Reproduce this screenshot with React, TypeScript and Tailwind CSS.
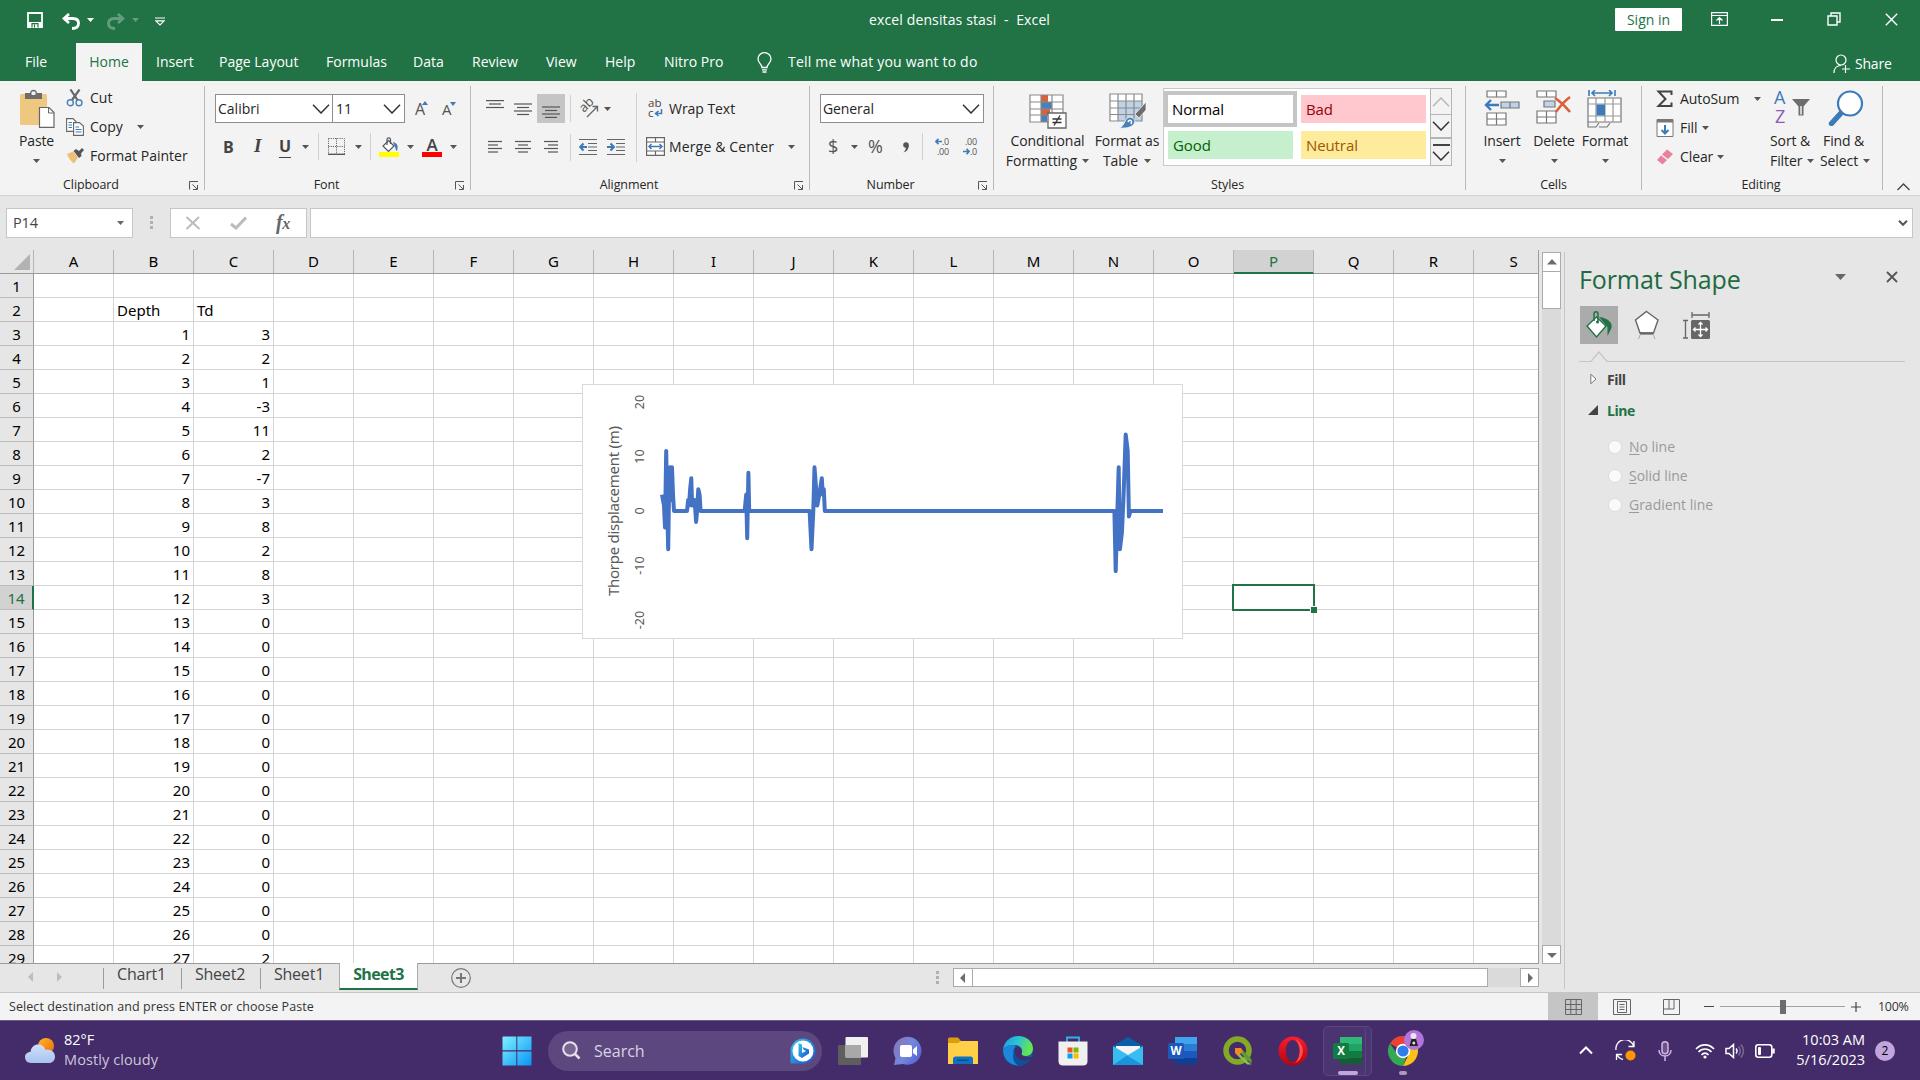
import React from "react";

type Box = { className?: string };

const Caret = ({ className = "" }: Box) => (
  <svg className={`block shrink-0 ${className}`} width="7" height="4" viewBox="0 0 7 4">
    <path d="M0 0H7L3.5 4Z" fill="currentColor" />
  </svg>
);

const Chevron = ({ className = "" }: Box) => (
  <svg className={`block shrink-0 ${className}`} width="18" height="10" viewBox="0 0 18 10" fill="none" stroke="#333" strokeWidth="1.5">
    <path d="M1 .8L9 9L17 .8" />
  </svg>
);

const Launcher = () => (
  <svg className="block shrink-0" width="10" height="10" viewBox="0 0 10 10" fill="none" stroke="#555" strokeWidth="1">
    <path d="M.5 8.500V.5H9M3.500 3.500L8 8M8.500 4V8.500H4" />
  </svg>
);

const VSep = ({ className = "" }: Box) => <div className={`w-px shrink-0 bg-[#d0d0d0] ${className}`} />;
const GroupSep = () => <div className="mt-[5px] h-[104px] w-px shrink-0 bg-[#b9b9b9]" />;

function Group({ label, className, launcher, children }: { label: string; className: string; launcher?: boolean; children: React.ReactNode }) {
  return (
    <div className={`flex shrink-0 flex-col ${className}`}>
      <div className="h-[94px]">{children}</div>
      <div className="flex h-[20px] items-center pt-[1px]">
        <div className="flex-1 text-center text-[12.5px] tracking-[-0.1px]">{label}</div>
        {launcher && (
          <div className="flex w-[22px] justify-end pr-[5px]">
            <Launcher />
          </div>
        )}
      </div>
    </div>
  );
}

const Lines = ({ rows, className = "" }: { rows: [number, number, number][]; className?: string }) => (
  <svg className={`block shrink-0 ${className}`} width="18" height="18" viewBox="0 0 18 18" stroke="#555" strokeWidth="1.2">
    {rows.map(([a, b, y]) => (
      <path key={y} d={`M${a} ${y}H${b}`} />
    ))}
  </svg>
);

const Indent = ({ out, className = "" }: { out?: boolean; className?: string }) => (
  <svg className={`block shrink-0 ${className}`} width="18" height="18" viewBox="0 0 18 18" fill="none" stroke="#666" strokeWidth="1.2">
    <path d="M0 1.500H18M9 5.500H18M9 9H18M9 12.500H18M0 16.500H18" />
    {out ? <path d="M8 9H2M4.500 5.500L1.200 9L4.500 12.500" stroke="#3d7ab8" strokeWidth="2.200" /> : <path d="M0 9H6M3.500 5.500L6.800 9L3.500 12.500" stroke="#3d7ab8" strokeWidth="2.200" />}
  </svg>
);

function Decimal({ inc, className = "" }: { inc?: boolean; className?: string }) {
  const arrow = (
    <svg width="7" height="7" viewBox="0 0 8 8" fill="none" stroke="#3d7ab8" strokeWidth="1.800">
      {inc ? <path d="M8 4H2M4 1L1 4L4 7" /> : <path d="M0 4H6M4 1L7 4L4 7" />}
    </svg>
  );
  return (
    <div className={`flex shrink-0 flex-col items-end text-[9px] leading-[10px] tracking-[-0.2px] text-[#555] ${className}`}>
      <div className="flex items-center">{inc ? arrow : null}{inc ? ".0" : ".00"}</div>
      <div className="flex items-center">{inc ? null : arrow}{inc ? ".00" : ".0"}</div>
    </div>
  );
}

function TitleBar() {
  return (
    <div className="flex h-[43px] items-start text-white">
      <svg className="mt-[12px] ml-[27px] block" width="16" height="16" viewBox="0 0 16 16" fill="none" stroke="#fff" strokeWidth="1.8">
        <path d="M1 1H15V15H1Z" />
        <path d="M1 10H15V15H1Z" fill="#fff" stroke="none" />
        <path d="M5 15.500V11.700H11V15.500M7.500 12.500V15.500" stroke="#217346" strokeWidth="1.200" />
      </svg>
      <svg className="mt-[13px] ml-[19px] block" width="18" height="17" viewBox="0 0 18 17" fill="none" stroke="#fff" strokeWidth="2.800">
        <path d="M7 1L2 5.500L7 10M2 5.500H11C15 5.500 16.500 8 16.500 10.500C16.500 14 13.500 15.500 10 15.500" />
      </svg>
      <Caret className="mt-[18px] ml-[7px]" />
      <svg className="mt-[13px] ml-[13px] block opacity-30" width="18" height="17" viewBox="0 0 18 17" fill="none" stroke="#fff" strokeWidth="2.800">
        <path d="M11 1L16 5.500L11 10M16 5.500H7C3 5.500 1.500 8 1.500 10.500C1.500 14 4.500 15.500 8 15.500" />
      </svg>
      <Caret className="mt-[18px] ml-[7px] opacity-30" />
      <svg className="mt-[17px] ml-[16px] block" width="10" height="9" viewBox="0 0 10 9" fill="none" stroke="#fff" strokeWidth="1.200">
        <path d="M0 1H10M.8 3.800L5 8L9.200 3.800Z" />
      </svg>
      <div className="mt-[10px] ml-[704px] w-[182px] text-[14px] leading-[20px] tracking-[0.13px] whitespace-pre">excel densitas stasi  -  Excel</div>
      <div className="mt-[8px] ml-[564px] flex h-[23px] w-[67px] items-center justify-center rounded-[1px] bg-white text-[14px] text-[#217346]">Sign in</div>
      <svg className="mt-[12px] ml-[29px] block" width="17" height="14" viewBox="0 0 17 14" fill="none" stroke="#fff" strokeWidth="1.200">
        <path d="M.6 .6H16.400V13.400H.6ZM.6 3.500H16.400M8.500 12V6M5.500 8.500L8.500 5.500L11.500 8.500" />
      </svg>
      <div className="mt-[19px] ml-[43px] h-[1.5px] w-[12px] bg-white" />
      <svg className="mt-[12px] ml-[44px] block" width="14" height="14" viewBox="0 0 14 14" fill="none" stroke="#fff" strokeWidth="1.400">
        <path d="M1 4H10V13H1ZM4 4V1H13V10H10" />
      </svg>
      <svg className="mt-[13px] ml-[44px] block" width="13" height="13" viewBox="0 0 13 13" fill="none" stroke="#fff" strokeWidth="1.400">
        <path d="M.8 .8L12.200 12.200M12.200 .8L.8 12.200" />
      </svg>
    </div>
  );
}

function RibbonTabs() {
  const tabs: [string, string][] = [
    ["Insert", "w-[63px]"], ["Page Layout", "w-[107px]"], ["Formulas", "w-[87px]"], ["Data", "w-[59px]"], ["Review", "w-[74px]"],
    ["View", "w-[59px]"], ["Help", "w-[59px]"], ["Nitro Pro", "w-[93px]"],
  ];
  return (
    <div className="flex h-[38px] items-stretch text-[14px] leading-[38px] tracking-[0px] text-white">
      <div className="w-[76px] pl-[25px]">File</div>
      <div className="w-[66px] bg-[#f3f3f3] text-center text-[#217346]">Home</div>
      <div className="w-[14px]" />
      {tabs.map(([t, w]) => (
        <div key={t} className={`shrink-0 whitespace-nowrap ${w}`}>{t}</div>
      ))}
      <svg className="mt-[9px] block" width="15" height="21" viewBox="0 0 15 21" fill="none" stroke="#fff" strokeWidth="1.300">
        <path d="M5 15.500C5 12 1 11 1 7A6.500 6.300 0 0 1 14 7C14 11 10 12 10 15.500ZM5 17.800H10M5.500 20H9.500" />
      </svg>
      <div className="ml-[16px] w-[1045px] tracking-[0.2px]">Tell me what you want to do</div>
      <svg className="mt-[11px] block" width="17" height="20" viewBox="0 0 17 20" fill="none" stroke="#fff" strokeWidth="1.200">
        <circle cx="8" cy="6" r="5" />
        <path d="M1 19C1 14 4 11.500 8 11.500M12.500 11V19M9 15H17" />
      </svg>
      <div className="ml-[5px] pt-[2px] tracking-[-0.2px]">Share</div>
    </div>
  );
}

function Clipboard() {
  return (
    <Group label="Clipboard" className="w-[204px]" launcher>
      <div className="flex">
        <div className="ml-[14px] flex w-[45px] flex-col items-center pt-[8px]">
          <svg width="36" height="39" viewBox="0 0 36 39">
            <rect x="1" y="5" width="27" height="31" rx="1.500" fill="#edc87e" />
            <path d="M6 4H11C11 -.5 18 -.5 18 4H23V10H6Z" fill="#6d6d6d" />
            <rect x="12.500" y="2.500" width="4" height="3.500" rx="1" fill="#f3f3f3" />
            <path d="M20.500 18.500H30L35 23.500V38.300H20.500Z" fill="#fff" stroke="#666" strokeWidth="1.200" />
            <path d="M29.500 18.500V24H35" fill="none" stroke="#666" />
          </svg>
          <div className="mt-[4px] text-[14px] leading-[18px] tracking-[-0.1px]">Paste</div>
          <Caret className="mt-[9px] text-[#555]" />
        </div>
        <div className="ml-[7px] flex flex-col pt-[2px] text-[14px] leading-[29px] tracking-[0px]">
          <div className="flex h-[29px] items-center">
            <svg width="18" height="18" viewBox="0 0 18 18" fill="none">
              <path d="M4.500 .5L11.500 11M13.500 .5L6 11" stroke="#666" strokeWidth="2.200" />
              <circle cx="4.300" cy="13.700" r="3" stroke="#4a80b8" strokeWidth="1.400" />
              <circle cx="13" cy="13.700" r="3" stroke="#4a80b8" strokeWidth="1.400" />
            </svg>
            <span className="ml-[6px]">Cut</span>
          </div>
          <div className="flex h-[29px] items-center">
            <svg width="18" height="18" viewBox="0 0 18 18" fill="#fff" stroke="#666" strokeWidth="1.100">
              <path d="M.6 .6H7L10 3.600V13.400H.6Z" />
              <path d="M7.600 4.600H13.500L17.400 8V17.400H7.600Z" />
              <path d="M2.500 4.500H6M2.500 7H6M2.500 9.500H6M9.500 9H13M9.500 11.500H15.500M9.500 14H15.500" stroke="#3d7ab8" />
            </svg>
            <span className="ml-[6px] w-[34px]">Copy</span>
            <Caret className="ml-[13px] text-[#555]" />
          </div>
          <div className="flex h-[29px] items-center">
            <svg width="18" height="16" viewBox="0 0 18 16">
              <path d="M1 6L7 3.500L12 9.500L8 15.500C5 13.500 2.500 10 1 6Z" fill="#edc07a" />
              <path d="M7.500 3L10 1L13 3L16 0L18 2L15 5.500L15.500 8L13 10Z" fill="#555" />
            </svg>
            <span className="ml-[6px] whitespace-nowrap">Format Painter</span>
          </div>
        </div>
      </div>
    </Group>
  );
}

function FontGroup() {
  return (
    <Group label="Font" className="w-[265px]" launcher>
      <div className="mt-0 flex h-[42px] items-center pt-[13px] pl-[10px] text-[14px]">
        <div className="flex h-[29px] w-[118px] shrink-0 items-center justify-between border border-[#8e8e8e] bg-white pr-[2px] pl-[2px]">Calibri<Chevron /></div>
        <div className="-ml-px flex h-[29px] w-[73px] shrink-0 items-center justify-between border border-[#8e8e8e] bg-white pr-[3px] pl-[3px]">11<Chevron /></div>
        <div className="ml-[10px] flex w-[15px] items-start text-[16px] leading-none text-[#555]">
          A<svg className="-ml-[3px] block shrink-0" width="6" height="4" viewBox="0 0 6 4"><path d="M0 4L3 0L6 4Z" fill="#3d7ab8" /></svg>
        </div>
        <div className="ml-[12px] flex w-[15px] items-start pt-px text-[15px] leading-none text-[#555]">
          A<svg className="-ml-[2px] block shrink-0" width="6" height="4" viewBox="0 0 6 4"><path d="M0 0L3 4L6 0Z" fill="#3d7ab8" /></svg>
        </div>
      </div>
      <div className="mt-[9px] flex h-[29px] items-center pl-[18px] text-[#444]">
        <span className="w-[31px] text-[16px] font-bold">B</span>
        <span className="w-[25px] font-['Liberation_Serif'] text-[19px] font-bold italic">I</span>
        <span className="w-[23px] text-[16px] leading-[17px]"><span className="border-b border-[#444] font-bold">U</span></span>
        <Caret className="text-[#555]" />
        <VSep className="ml-[9px] h-[27px]" />
        <svg className="ml-[9px] block" width="17" height="17" viewBox="0 0 17 17" stroke="#555" fill="none">
          <path d="M.5 .5H16.500V16M.5 .5V16M8.500 .5V16M.5 8.500H16.500" strokeDasharray="1 1.200" />
          <path d="M0 16.300H17" strokeWidth="1.400" />
        </svg>
        <Caret className="ml-[10px] text-[#555]" />
        <VSep className="ml-[8px] h-[27px]" />
        <svg className="ml-[8px] block" width="20" height="20" viewBox="0 0 20 20">
          <path d="M9.500 3.500L15 9L9.500 14.500L4 9Z" fill="#fff" stroke="#555" strokeWidth="1.200" />
          <path d="M8 8V2.500C8 .3 11.500 .3 11.500 2.500V7" fill="none" stroke="#555" strokeWidth="1.200" />
          <path d="M14 5C18.500 6 19.500 9 18 14C16 13 17 10.500 15.500 9Z" fill="#3d7ab8" />
          <rect x="0" y="15" width="20" height="5" fill="#ffff00" />
        </svg>
        <Caret className="ml-[8px] text-[#555]" />
        <div className="ml-[8px] flex h-[20px] w-[20px] flex-col items-center justify-between text-[17px] leading-[15px] font-semibold">
          A<div className="h-[5px] w-[20px] shrink-0 bg-[#ff0000]" />
        </div>
        <Caret className="ml-[8px] text-[#555]" />
      </div>
    </Group>
  );
}

function Alignment() {
  return (
    <Group label="Alignment" className="w-[338px]" launcher>
      <div className="flex text-[14px]">
        <div className="w-[99px]">
          <div className="flex h-[42px] items-center pt-[13px]">
            <Lines className="ml-[15px]" rows={[[0, 18, 0.600], [3, 15, 4], [0, 18, 7.500]]} />
            <Lines className="ml-[10px]" rows={[[0, 18, 4], [3, 15, 7.500], [0, 18, 11], [3, 15, 14.500]]} />
            <div className="ml-[5px] flex h-[29px] w-[28px] shrink-0 items-center justify-center bg-[#c5c5c5]">
              <Lines rows={[[0, 18, 7], [3, 15, 10.500], [0, 18, 14], [3, 15, 17.400]]} />
            </div>
          </div>
          <div className="mt-[9px] flex h-[29px] items-center">
            <Lines className="ml-[17px]" rows={[[0, 14, 3.500], [0, 10, 7], [0, 14, 10.500], [0, 10, 14]]} />
            <Lines className="ml-[9px]" rows={[[0, 16, 3.500], [3, 13, 7], [0, 16, 10.500], [3, 13, 14]]} />
            <Lines className="ml-[11px]" rows={[[0, 14, 3.500], [4, 14, 7], [0, 14, 10.500], [4, 14, 14]]} />
          </div>
        </div>
        <div className="flex w-px flex-col">
          <VSep className="mt-[14px] h-[27px]" />
          <VSep className="mt-[12px] h-[27px]" />
        </div>
        <div className="w-[65px]">
          <div className="flex h-[42px] items-center pt-[13px]">
            <svg className="ml-[8px] block overflow-visible" width="20" height="19" viewBox="0 0 20 19" fill="none" stroke="#666" strokeWidth="1.300">
              <path d="M8 18L18 8M13.500 7.500H18.500V12.500" />
              <text x="0" y="0" transform="translate(5 14) rotate(-45)" fontSize="13" fill="#555" stroke="none">ab</text>
            </svg>
            <Caret className="ml-[5px] text-[#555]" />
          </div>
          <div className="mt-[9px] flex h-[29px] items-center">
            <Indent out className="ml-[8px]" />
            <Indent className="ml-[10px]" />
          </div>
        </div>
        <VSep className="mt-[12px] h-[69px]" />
        <div>
          <div className="flex h-[42px] items-center pt-[12px]">
            <div className="ml-[11px] flex w-[16px] flex-col text-[11.5px] leading-[10px] text-[#444]">
              <span>ab</span>
              <span className="flex items-center">c<svg width="9" height="8" viewBox="0 0 9 8" fill="none" stroke="#3d7ab8" strokeWidth="1.500"><path d="M7.500 0V4.500H2M4.500 2L1.500 4.500L4.500 7" /></svg></span>
            </div>
            <span className="ml-[5px] tracking-[-0.05px]">Wrap Text</span>
          </div>
          <div className="mt-[9px] flex h-[29px] items-center">
            <svg className="ml-[9px] block" width="19" height="19" viewBox="0 0 19 19" fill="#fff" stroke="#666" strokeWidth="1.200">
              <path d="M.6 .6H18.400V18.400H.6ZM.6 5H18.400M.6 14H18.400M9.500 .6V5M9.500 14V18.400" />
              <path d="M3 9.500H16M5.500 7L3 9.500L5.500 12M13.500 7L16 9.500L13.500 12" stroke="#3d7ab8" fill="none" strokeWidth="1.500" />
            </svg>
            <span className="ml-[4px] w-[107px] whitespace-nowrap tracking-[0.15px]">Merge &amp; Center</span>
            <Caret className="ml-[12px] text-[#555]" />
          </div>
        </div>
      </div>
    </Group>
  );
}

function NumberGroup() {
  return (
    <Group label="Number" className="w-[183px]" launcher>
      <div className="flex h-[42px] items-center pt-[13px] pl-[10px] text-[14px]">
        <div className="flex h-[29px] w-[164px] items-center justify-between border border-[#8e8e8e] bg-white pr-[3px] pl-[2px] tracking-[-0.1px]">General<Chevron /></div>
      </div>
      <div className="mt-[9px] flex h-[29px] items-center pl-[18px] text-[18px] text-[#555]">
        <span className="w-[23px]">$</span>
        <Caret />
        <span className="ml-[10px] w-[34px] text-[18px]">%</span>
        <span className="flex w-[20px] justify-start">
          <svg width="8" height="12" viewBox="0 0 8 12"><circle cx="4" cy="4" r="2.800" fill="#555" /><path d="M6.800 4C6.800 8 5 10.500 1.500 11.500C3.500 9.500 4 7.500 4 5Z" fill="#555" /></svg>
        </span>
        <VSep className="h-[27px]" />
        <Decimal inc className="ml-[9px] w-[17px]" />
        <Decimal className="ml-[11px] w-[17px]" />
      </div>
    </Group>
  );
}

function StyleTile({ text, className }: { text: string; className: string }) {
  return <div className={`flex h-[28px] w-[125px] shrink-0 items-center pb-px pl-[5px] text-[15px] tracking-[-0.1px] ${className}`}>{text}</div>;
}

function Styles() {
  return (
    <Group label="Styles" className="w-[471px] [&>div:last-child]:pr-[4px]">
      <div className="flex h-[94px] text-[14px] leading-[20px] tracking-[-0.05px]">
        <div className="ml-[8px] flex w-[91px] flex-col items-center pt-[13px]">
          <svg width="38" height="35" viewBox="0 0 38 35">
            <path d="M1 1H34V28H1Z" fill="#fff" />
            <path d="M12 1H19V8H12ZM12 15H21V21H12Z" fill="#d9603b" />
            <path d="M12 8H23V15H12ZM12 21H18V28H12Z" fill="#4a80b8" />
            <path d="M1 1H34V28H1ZM12 1V28M23 1V28M1 8H34M1 15H34M1 21H34" fill="none" stroke="#8a8a8a" strokeWidth="1.200" />
            <path d="M19 19H37V34H19Z" fill="#fff" stroke="#666" strokeWidth="1.300" />
            <path d="M23.500 25H32.500M23.500 28.500H32.500M31 21.500L25 31.500" stroke="#333" strokeWidth="1.300" />
          </svg>
          <span className="mt-[2px]">Conditional</span>
          <span className="flex items-center">Formatting<Caret className="ml-[5px] text-[#555]" /></span>
        </div>
        <div className="flex w-[68px] flex-col items-center pt-[12px]">
          <svg className="ml-[2px]" width="38" height="36" viewBox="0 0 38 36">
            <path d="M1 1H33V28H1Z" fill="#fff" />
            <path d="M9 8H33V28H9Z" fill="#bfd2e8" />
            <path d="M1 1H33V28H1ZM9 1V28M17 1V28M25 1V28M1 8H33M1 15H33M1 21.500H33" fill="none" stroke="#8a8a8a" strokeWidth="1.200" />
            <path d="M37 9V17L30 25L26 21Z" fill="#6d6d6d" stroke="#f3f3f3" strokeWidth=".8" />
            <path d="M10 35C16 33 15 26 20 24C25 24 27 28 25 31C22 35 16 35.500 10 35Z" fill="#4a80b8" stroke="#f3f3f3" />
            <path d="M19 29C20 26 24 27 22 31" fill="none" stroke="#fff" strokeWidth="1.500" />
          </svg>
          <span className="mt-[2px] whitespace-nowrap">Format as</span>
          <span className="flex items-center">Table<Caret className="ml-[6px] text-[#555]" /></span>
        </div>
        <div className="mt-[7px] ml-[2px] flex h-[78px] w-[289px] border border-[#c9c9c9] bg-white">
          <div className="w-[266px] shrink-0">
            <div className="mt-[2px] flex h-[36px] items-center">
              <div className="flex h-[36px] w-[133px] items-center border-4 border-[#c5c5c5] bg-white pl-[4px] text-[15px] tracking-[-0.1px] text-black">Normal</div>
              <StyleTile text="Bad" className="ml-[4px] bg-[#ffc7ce] text-[#9c0006]" />
            </div>
            <div className="mt-[4px] flex">
              <StyleTile text="Good" className="ml-[4px] bg-[#c6efce] text-[#006100]" />
              <StyleTile text="Neutral" className="ml-[8px] bg-[#ffeb9c] text-[#9c5700]" />
            </div>
          </div>
          <div className="-my-px -mr-px flex flex-1 flex-col border border-[#b5b5b5] bg-[#f3f3f3]">
            <div className="flex h-[25px] items-center justify-center opacity-30"><Chevron className="rotate-180" /></div>
            <div className="flex h-[24px] items-center justify-center border-y border-[#b5b5b5]"><Chevron /></div>
            <div className="flex flex-1 flex-col items-center justify-center gap-[5px] border-t border-[#b5b5b5]">
              <div className="h-[2px] w-[17px] bg-[#444]" />
              <Chevron />
            </div>
          </div>
        </div>
      </div>
    </Group>
  );
}

function Cells() {
  const col = "flex flex-col items-center pt-[9px]";
  return (
    <Group label="Cells" className="w-[175px]">
      <div className="flex text-[14px] leading-[20px] tracking-[-0.1px]">
        <div className={`ml-[12px] w-[48px] ${col}`}>
          <svg width="36" height="36" viewBox="0 0 36 36" fill="#fff" stroke="#777" strokeWidth="1.200">
            <path d="M3 1H22V7H3ZM12.500 1V7M3 23H22V35H3ZM12.500 23V35M3 29H22" />
            <path d="M17 12H35V18H17ZM26 12V18" fill="#bfd2e8" />
            <path d="M15 15H2M7 10L2 15L7 20" fill="none" stroke="#3d7ab8" strokeWidth="2.400" />
          </svg>
          <span className="mt-[5px]">Insert</span>
          <Caret className="mt-[8px] text-[#555]" />
        </div>
        <div className={`ml-[2px] w-[52px] ${col}`}>
          <svg width="36" height="36" viewBox="0 0 36 36" fill="#fff" stroke="#777" strokeWidth="1.200">
            <path d="M1 1H20V7H1ZM10.500 1V7M1 21H20V33H1ZM10.500 21V33M1 27H20" />
            <path d="M8 11H19V17H8Z" fill="#bfd2e8" />
            <path d="M19 8C25 12 30 17 34 22M34 7C27 12 23 18 20 22" fill="none" stroke="#d9603b" strokeWidth="2.500" />
          </svg>
          <span className="mt-[5px]">Delete</span>
          <Caret className="mt-[8px] text-[#555]" />
        </div>
        <div className={`w-[50px] ${col}`}>
          <svg width="36" height="38" viewBox="0 0 36 38" fill="#fff" stroke="#777" strokeWidth="1.200">
            <path d="M1 8H34V32H1Z" />
            <path d="M1 14H34M1 26H34M9 8V32M18 8V32M26 8V32" stroke="#999" />
            <path d="M9.500 14.500H18V25.500H9.500Z" fill="#3d7ab8" stroke="none" />
            <path d="M1 32V37H9L12 33M12 37H20L23 33" fill="none" />
            <path d="M2 0V6M28 0V6M5 3H25M8 0L5 3L8 6M22 0L25 3L22 6" fill="none" stroke="#3d7ab8" strokeWidth="1.600" />
          </svg>
          <span className="mt-[3px]">Format</span>
          <Caret className="mt-[8px] text-[#555]" />
        </div>
      </div>
    </Group>
  );
}

function Editing() {
  return (
    <Group label="Editing" className="w-[240px] [&>div:last-child]:pr-[2px]">
      <div className="flex text-[14px] leading-[20px] tracking-[-0.1px]">
        <div className="ml-[14px] w-[111px] pt-[3px]">
          <div className="flex h-[29px] items-center">
            <svg width="18" height="18" viewBox="0 0 18 18" fill="none" stroke="#444" strokeWidth="2">
              <path d="M15.500 5V1.500H2.500L9.500 9L2.500 16H15.500V12.500" />
            </svg>
            <span className="ml-[6px] w-[62px]">AutoSum</span>
            <Caret className="ml-[12px] text-[#555]" />
          </div>
          <div className="flex h-[29px] items-center">
            <svg width="18" height="18" viewBox="0 0 18 18" fill="#fff" stroke="#777">
              <path d="M1 .5H17V17.500H1Z" />
              <path d="M1 2H17" strokeWidth="3" />
              <path d="M9 6V14M5.500 11L9 14.500L12.500 11" fill="none" stroke="#3d7ab8" strokeWidth="2" />
            </svg>
            <span className="ml-[6px]">Fill</span>
            <Caret className="ml-[5px] text-[#555]" />
          </div>
          <div className="flex h-[29px] items-center">
            <svg width="18" height="16" viewBox="0 0 18 16">
              <path d="M11 0.500L17 5L12 10L6 5.500Z" fill="#e8829a" />
              <path d="M5 6.500L11 11L6.500 15.500L1 11Z" fill="#e8829a" />
            </svg>
            <span className="ml-[6px]">Clear</span>
            <Caret className="ml-[4px] text-[#555]" />
          </div>
        </div>
        <div className="w-[50px] pt-[9px]">
          <svg className="ml-[8px] block overflow-visible" width="36" height="36" viewBox="0 0 36 36">
            <text x="-1" y="14" fontSize="18" fill="#3d7ab8">A</text>
            <text x="0" y="33" fontSize="18" fill="#8e5bb0">Z</text>
            <path d="M17 9H35L28.500 16.500V25.500H23.500V16.500Z" fill="#6d6d6d" />
            <path d="M26 16V24.500" stroke="#f3f3f3" strokeWidth="1.500" />
          </svg>
          <span className="mt-[5px] block pl-[3px]">Sort &amp;</span>
          <span className="flex items-center pl-[3px]">Filter<Caret className="ml-[5px] text-[#555]" /></span>
        </div>
        <div className="w-[55px] pt-[9px]">
          <svg className="ml-[11px] block" width="36" height="36" viewBox="0 0 36 36" fill="none" stroke="#3d7ab8">
            <path d="M14 22L3.500 33.500" strokeWidth="5.500" strokeLinecap="round" />
            <circle cx="22" cy="13.500" r="12" fill="#fff" strokeWidth="2.200" />
          </svg>
          <span className="mt-[5px] block pl-[6px]">Find &amp;</span>
          <span className="flex items-center pl-[3px]">Select<Caret className="ml-[5px] text-[#555]" /></span>
        </div>
      </div>
    </Group>
  );
}

function Ribbon() {
  return (
    <div className="flex h-[115px] border-b border-[#d2d2d2] bg-[#f3f3f3] text-[#262626]">
      <Clipboard />
      <GroupSep />
      <FontGroup />
      <GroupSep />
      <Alignment />
      <GroupSep />
      <NumberGroup />
      <GroupSep />
      <Styles />
      <GroupSep />
      <Cells />
      <GroupSep />
      <Editing />
      <GroupSep />
      <svg className="mt-[102px] ml-[14px] block" width="13" height="8" viewBox="0 0 13 8" fill="none" stroke="#444" strokeWidth="1.300">
        <path d="M.5 7L6.500 1L12.500 7" />
      </svg>
    </div>
  );
}

const Dots = ({ className = "" }: Box) => (
  <div className={`flex flex-col gap-[2px] ${className}`}>
    <div className="h-[3px] w-[3px] bg-[#b0b0b0]" />
    <div className="h-[3px] w-[3px] bg-[#b0b0b0]" />
    <div className="h-[3px] w-[3px] bg-[#b0b0b0]" />
  </div>
);

function FormulaBar() {
  return (
    <div className="flex h-[54px] items-start pt-[12px] pl-[6px]">
      <div className="flex h-[30px] w-[127px] items-center justify-between border border-[#c6c6c6] bg-white pr-[8px] pl-[6px] text-[14.5px] tracking-[-0.1px] text-[#444]">P14<Caret className="text-[#666]" /></div>
      <Dots className="mt-[8px] ml-[17px]" />
      <div className="ml-[17px] flex h-[30px] w-[137px] items-center border border-[#c6c6c6] bg-white">
        <svg className="ml-[14px]" width="16" height="14" viewBox="0 0 16 14" fill="none" stroke="#bcbcbc" strokeWidth="2"><path d="M1.500 1L14.500 13M14 1L1.500 13" /></svg>
        <svg className="ml-[29px]" width="17" height="14" viewBox="0 0 17 14" fill="none" stroke="#bcbcbc" strokeWidth="3"><path d="M1 8L6 12L16 1.500" /></svg>
        <span className="ml-[29px] pb-[2px] font-['Liberation_Serif'] text-[20px] font-bold tracking-[-0.5px] text-[#666] italic">f<span className="text-[16px]">x</span></span>
      </div>
      <div className="ml-[3px] flex h-[30px] w-[1603px] items-center justify-end border border-[#c6c6c6] bg-white pr-[4px]">
        <svg width="10" height="6" viewBox="0 0 10 6" fill="none" stroke="#555" strokeWidth="2"><path d="M1 .8L5 4.800L9 .8" /></svg>
      </div>
    </div>
  );
}

const COLS = "ABCDEFGHIJKLMNOPQRS".split("");
const ROWS = Array.from({ length: 29 }, (_, i) => i + 1);
const TD = [3, 2, 1, -3, 11, 2, -7, 3, 8, 2, 8, 3, 0, 0, 0, 0, 0, 0, 0, 0, 0, 0, 0, 0, 0, 0, 2];

function cellText(row: number, col: string): string {
  if (row === 2) return col === "B" ? "Depth" : col === "C" ? "Td" : "";
  if (row >= 3 && col === "B") return String(row - 2);
  if (row >= 3 && col === "C") return String(TD[row - 3]);
  return "";
}

const SERIES: [number, number][] = [
  [0, 3], [1, 2], [2, 1], [3, -3], [4.200, 11], [5, 2], [6.200, -7], [7, 3], [8, 8], [9, 2], [10, 8], [11, 3], [12, 0],
  [25, 0], [26, 2], [27, 1], [28, 4], [29.200, 6], [30, 1], [31, 2], [32.500, 2], [34, -2], [35, 0], [36.200, 4], [37.500, 3], [38.500, 0],
  [82.500, 0], [84, 3], [85, -5], [86.200, 7], [87, 0], [147.300, 0], [149.200, -7], [151, 0], [152.200, 8], [155, 1], [157, 3], [159.500, 6], [160.500, 3],
  [161.500, 4], [162.500, 0], [451.500, 0], [452.800, -11], [454.500, 0], [455.800, 8], [457, -7], [459, -4], [460.500, 2], [462.800, 14], [464.800, 11],
  [466, -1], [467.500, 0], [500, 0],
];

function Chart() {
  const points = SERIES.map(([i, v]) => `${(80 + i * 1.002).toFixed(1)},${(127 - v * 5.460).toFixed(1)}`).join(" ");
  return (
    <div className="absolute top-[134px] left-[582px] h-[255px] w-[601px] border border-[#d9d9d9] bg-white">
      <svg className="block" width="599" height="253" viewBox="1 1 599 253" fill="#595959">
        <text transform="translate(36.500 127) rotate(-90)" textAnchor="middle" fontSize="15" textLength="170">Thorpe displacement (m)</text>
        {[20, 10, 0, -10, -20].map((v) => (
          <text key={v} transform={`translate(62 ${127 - v * 5.450}) rotate(-90)`} textAnchor="middle" fontSize="12.500">{v}</text>
        ))}
        <polyline points={points} fill="none" stroke="#4472c4" strokeWidth="4" strokeLinejoin="round" strokeLinecap="butt" />
      </svg>
    </div>
  );
}

function Grid() {
  return (
    <div className="relative h-[714px] w-[1539px] shrink-0 overflow-hidden border-r border-b border-[#9b9b9b] font-['Noto_Sans'] text-black">
      <div className="flex h-[24px] border-b border-[#9b9b9b]">
        <div className="flex w-[34px] shrink-0 justify-end border-r border-[#b5b5b5] pt-[4px] pr-[3px]">
          <svg width="16" height="16" viewBox="0 0 16 16"><path d="M16 0V16H0Z" fill="#b2b2b2" /></svg>
        </div>
        {COLS.map((c) => (
          <div key={c} className={`w-[80px] shrink-0 border-r border-[#b5b5b5] text-center text-[15px] leading-[23px] ${c === "P" ? "-mb-px border-b-2 border-b-[#217346] bg-[#d2d2d2] text-[#217346]" : ""}`}>{c}</div>
        ))}
      </div>
      {ROWS.map((r) => (
        <div key={r} className="flex h-[24px] bg-white text-[15px] leading-[24px]">
          <div className={`w-[34px] shrink-0 border-r border-b border-b-[#bdbdbd] text-center text-[15px] ${r === 14 ? "border-r-2 border-r-[#217346] bg-[#d2d2d2] text-[#217346]" : "border-r-[#9b9b9b] bg-[#e6e6e6]"}`}>{r}</div>
          {COLS.map((c) => (
            <div key={c} className={`w-[80px] shrink-0 border-r border-b border-[#d4d4d4] px-[3px] ${r > 2 ? "text-right" : ""}`}>{cellText(r, c)}</div>
          ))}
        </div>
      ))}
      <div className="absolute top-[334px] left-[1232px] h-[27px] w-[83px] border-2 border-[#217346]">
        <div className="absolute -right-[4px] -bottom-[4px] h-[7px] w-[7px] border-t border-l border-white bg-[#217346]" />
      </div>
      <Chart />
    </div>
  );
}

const Tri = ({ d, color = "#6d6d6d" }: { d: string; color?: string }) => (
  <svg width="10" height="10" viewBox="0 0 10 10"><path d={d} fill={color} /></svg>
);

function VScroll() {
  return (
    <div className="mt-[2px] ml-[3px] flex h-[712px] w-[19px] shrink-0 flex-col bg-[#dadada]">
      <div className="flex h-[20px] items-center justify-center border border-[#ababab] bg-white"><Tri d="M0 7.500L5 2L10 7.500Z" /></div>
      <div className="-mt-px h-[38px] border border-[#ababab] bg-white" />
      <div className="flex-1" />
      <div className="flex h-[19px] items-center justify-center border border-[#ababab] bg-white"><Tri d="M0 3L5 8L10 3Z" /></div>
    </div>
  );
}

function SheetTabs() {
  return (
    <div className="flex h-[28px] w-[1564px] items-start text-[16px] leading-[21px] tracking-[-0.2px] text-[#444]">
      <div className="mt-[8px] ml-[26px] w-[28px]"><Tri d="M7 0V10L2 5Z" color="#bdbdbd" /></div>
      <div className="mt-[8px] w-[49px]"><Tri d="M3 0V10L8 5Z" color="#bdbdbd" /></div>
      <div className="mt-[4px] h-[21px] w-px bg-[#9b9b9b]" />
      <div className="w-[77px] pr-[2px] text-center">Chart1</div>
      <div className="mt-[4px] h-[21px] w-px bg-[#9b9b9b]" />
      <div className="w-[78px] pr-[2px] text-center">Sheet2</div>
      <div className="mt-[4px] h-[21px] w-px bg-[#9b9b9b]" />
      <div className="w-[78px] pr-[2px] text-center">Sheet1</div>
      <div className="relative -mt-px h-[27px] w-[79px] border-x border-b-2 border-x-[#ababab] border-b-[#217346] bg-white pt-px text-center font-bold tracking-[-0.6px] text-[#217346]">Sheet3</div>
      <svg className="mt-[4px] ml-[33px] block" width="20" height="20" viewBox="0 0 20 20" fill="none" stroke="#777">
        <circle cx="10" cy="10" r="9.300" strokeWidth="1.200" />
        <path d="M10 5V15M5 10H15" strokeWidth="2" />
      </svg>
      <Dots className="mt-[7px] ml-[465px]" />
      <div className="mt-[4px] ml-[14px] flex h-[19px] w-[586px] bg-[#dadada]">
        <div className="flex w-[20px] items-center justify-center border border-[#ababab] bg-white"><Tri d="M7 0V10L2 5Z" /></div>
        <div className="-ml-px w-[516px] border border-[#ababab] bg-white" />
        <div className="flex-1" />
        <div className="flex w-[19px] items-center justify-center border border-[#ababab] bg-white"><Tri d="M3 0V10L8 5Z" /></div>
      </div>
    </div>
  );
}

function Radio({ first, rest }: { first: string; rest: string }) {
  return (
    <div className="flex h-[29px] items-center text-[14px] tracking-[-0.02px] text-[#9a9a9a]">
      <div className="ml-[43px] h-[14px] w-[14px] rounded-full border border-[#dcdcdc] bg-[#fafafa]" />
      <span className="ml-[7px]"><span className="underline underline-offset-2">{first}</span>{rest}</span>
    </div>
  );
}

function FormatPane() {
  return (
    <div className="mt-[2px] flex flex-1 flex-col">
      <div className="mt-[11px] flex h-[32px] items-center pl-[14px]">
        <span className="w-[256px] text-[25px] leading-none tracking-[-0.1px] text-[#1e6a41]">Format Shape</span>
        <svg className="mb-[4px]" width="11" height="6" viewBox="0 0 11 6"><path d="M0 0H11L5.500 6Z" fill="#666" /></svg>
        <svg className="mb-[4px] ml-[40px]" width="12" height="12" viewBox="0 0 12 12" stroke="#555" strokeWidth="1.800"><path d="M1 1L11 11M11 1L1 11" /></svg>
      </div>
      <div className="mt-[11px] flex h-[38px] items-center pl-[15px]">
        <div className="flex h-[38px] w-[38px] items-center justify-center bg-[#ababab]">
          <svg width="28" height="28" viewBox="0 0 28 28">
            <path d="M11.500 6L21 15L11.500 26L2 15Z" fill="#fff" stroke="#217346" strokeWidth="1.400" />
            <path d="M9 10V3C9 0 13 0 13 3V11" fill="none" stroke="#217346" strokeWidth="1.500" />
            <circle cx="12.500" cy="11" r="1.500" fill="#217346" />
            <path d="M14 6C23 7 28 12 26.500 17L22.500 25V16Z" fill="#217346" />
          </svg>
        </div>
        <svg className="ml-[16px]" width="26" height="30" viewBox="0 0 26 30" fill="#fff" stroke="#666" strokeWidth="1.400">
          <path d="M12.500 1.500L24 10L19.500 23H6L1.500 10Z" />
          <path d="M6 23.500H19.500" strokeWidth="2.200" />
          <path d="M6 25L4.500 29M19.500 25L21 29" stroke="#aaa" strokeWidth="1" />
        </svg>
        <svg className="ml-[23px]" width="27" height="27" viewBox="0 0 27 27" fill="none" stroke="#666" strokeWidth="1.300">
          <path d="M9 0V6M26 0V6M9 3H26M0 8.500H5M0 26H5M2.500 8.500V26" />
          <rect x="8" y="8" width="19" height="19" rx="1.500" fill="#666" stroke="none" />
          <path d="M17.500 10.500V24.500M10.500 17.500H24.500M15.500 12.500L17.500 10.500L19.500 12.500M15.500 22.500L17.500 24.500L19.500 22.500M12.500 15.500L10.500 17.500L12.500 19.500M22.500 15.500L24.500 17.500L22.500 19.500" stroke="#fff" />
        </svg>
      </div>
      <svg className="mt-[7px] ml-[14px] block" width="326" height="12" viewBox="0 0 326 12" fill="none" stroke="#c4c4c4" strokeWidth="1.200"><path d="M0 10.500H12L20 1L28 10.500H326" /></svg>
      <div className="mt-[3px] flex h-[26px] items-center text-[14px] font-bold tracking-[-0.5px] text-[#444]">
        <svg className="ml-[25px]" width="7" height="12" viewBox="0 0 7 12" fill="#fff" stroke="#777"><path d="M.8 1.200V10.800L6 6Z" /></svg>
        <span className="ml-[10px]">Fill</span>
      </div>
      <div className="mt-[5px] flex h-[26px] items-center text-[14px] font-bold tracking-[-0.5px] text-[#217346]">
        <svg className="ml-[23px]" width="10" height="10" viewBox="0 0 10 10"><path d="M10 0V10H0Z" fill="#444" /></svg>
        <span className="ml-[9px]">Line</span>
      </div>
      <div className="mt-[9px]">
        <Radio first="N" rest="o line" />
        <Radio first="S" rest="olid line" />
        <Radio first="G" rest="radient line" />
      </div>
    </div>
  );
}

function StatusBar() {
  return (
    <div className="flex h-[28px] items-center border-t border-[#c6c6c6] bg-[#f3f3f3] text-[12.500px] text-[#333]">
      <span className="w-[1548px] pt-px pl-[9px] tracking-[0.080px]">Select destination and press ENTER or choose Paste</span>
      <div className="flex h-full w-[50px] items-center justify-center bg-[#c5c5c5]">
        <svg width="17" height="16" viewBox="0 0 17 16" fill="none" stroke="#666"><path d="M.5 .5H16.500V15.500H.5ZM5.800 .5V15.500M11.200 .5V15.500M.5 5.500H16.500M.5 10.500H16.500" /></svg>
      </div>
      <svg className="ml-[15px]" width="18" height="16" viewBox="0 0 18 16" fill="none" stroke="#666"><path d="M.5 .5H17.500V15.500H.5ZM4.500 2.500H13.500V13.500H4.500ZM6.500 5.500H11.500M6.500 8H11.500M6.500 10.500H11.500" /></svg>
      <svg className="ml-[32px]" width="17" height="16" viewBox="0 0 17 16" fill="none" stroke="#666"><path d="M.5 .5H16.500V15.500H.5ZM.5 10H11V.5M6 .5V10" /></svg>
      <div className="ml-[24px] h-[1.500px] w-[10px] bg-[#444]" />
      <div className="ml-[6px] flex h-[14px] w-[125px] items-center">
        <div className="h-px w-[60px] bg-[#a0a0a0]" />
        <div className="h-[14px] w-[6px] bg-[#6d6d6d]" />
        <div className="h-px flex-1 bg-[#a0a0a0]" />
      </div>
      <svg className="ml-[6px]" width="10" height="10" viewBox="0 0 10 10" stroke="#444" strokeWidth="1.200"><path d="M5 0V10M0 5H10" /></svg>
      <span className="ml-[17px] pt-px tracking-[-0.3px]">100%</span>
    </div>
  );
}

function OfficeIcon({ letter, c }: { letter: string; c: [string, string, string, string, string] }) {
  return (
    <svg width="30" height="30" viewBox="0 0 30 30">
      <rect x="7" y="1" width="22" height="7" fill={c[0]} />
      <rect x="7" y="8" width="22" height="7" fill={c[1]} />
      <rect x="7" y="15" width="22" height="7" fill={c[2]} />
      <rect x="7" y="22" width="22" height="6.500" fill={c[3]} />
      <rect x="0" y="7" width="16" height="16" rx="1.500" fill={c[4]} />
      <text x="8" y="19" textAnchor="middle" fontSize="11.500" fontWeight="bold" fill="#fff">{letter}</text>
    </svg>
  );
}

const Slot = ({ children }: { children: React.ReactNode }) => <div className="flex h-[60px] w-[55px] shrink-0 items-center justify-center">{children}</div>;

function Taskbar() {
  return (
    <div className="flex h-[60px] items-center border-t border-[#6b5a86] bg-[#432c69] text-white">
      <svg className="ml-[24px]" width="32" height="28" viewBox="0 0 32 28">
        <defs>
          <linearGradient id="cl" x1="0" y1="0" x2="0" y2="1"><stop offset="0" stopColor="#cfe0fa" /><stop offset="1" stopColor="#a9c3ee" /></linearGradient>
          <linearGradient id="sun" x1="0" y1="0" x2="1" y2="1"><stop offset="0" stopColor="#fbb829" /><stop offset="1" stopColor="#ef6c0f" /></linearGradient>
        </defs>
        <circle cx="22" cy="9" r="8" fill="url(#sun)" />
        <path d="M7 26C3 26 1 23 1 20C1 16.500 4 15 6.500 15C7 10 10.500 7.500 14 7.500C18 7.500 20.500 9.500 21.500 13C27 11.500 31 15 31 19.500C31 23.500 28.500 26 25 26Z" fill="url(#cl)" />
      </svg>
      <div className="ml-[8px] w-[438px] pb-[2px] text-[14.500px] leading-[20px]">
        <div>82°F</div>
        <div className="tracking-[0.1px] text-[#cfc6dc]">Mostly cloudy</div>
      </div>
      <svg width="30" height="30" viewBox="0 0 30 30">
        <defs><linearGradient id="win" x1="0" y1="0" x2="1" y2="1"><stop offset="0" stopColor="#7ff0ff" /><stop offset="1" stopColor="#0a93f5" /></linearGradient></defs>
        <path d="M1 .5H14.300V14.300H.5V1ZM15.300 .5H29.500V14.300H15.300ZM.5 15.500H14.300V29.500H.5ZM15.300 15.500H29.500V29.500H15.300Z" fill="url(#win)" />
      </svg>
      <div className="ml-[16px] flex h-[40px] w-[274px] items-center rounded-full bg-[#5c487e]">
        <svg className="ml-[14px]" width="19" height="19" viewBox="0 0 19 19" fill="none" stroke="#e6e1ee" strokeWidth="2"><circle cx="8" cy="8" r="6.800" fill="#76658f" /><path d="M13 13L17.500 17.500" strokeWidth="2.500" /></svg>
        <span className="ml-[13px] w-[196px] text-[16px] text-[#d9d2e4]">Search</span>
        <svg width="26" height="26" viewBox="0 0 26 26">
          <defs><linearGradient id="bing" x1="0" y1="0" x2="1" y2="1"><stop offset="0" stopColor="#35c3f3" /><stop offset="1" stopColor="#1a53c8" /></linearGradient></defs>
          <path d="M.5 25.500V13A12.500 12.500 0 1 1 13 25.500Z" fill="url(#bing)" />
          <circle cx="13" cy="13" r="10.500" fill="#fff" />
          <path d="M8.500 5L12 6.500V15L16 13L13.500 11.800L12.500 9L19 11.500V15.500L12 20L8.500 18Z" fill="url(#bing)" />
        </svg>
      </div>
      <div className="w-[3px]" />
      <Slot>
        <svg width="30" height="28" viewBox="0 0 30 28"><rect x="0" y="8" width="23" height="20" rx="1" fill="#5e5e5e" /><rect x="7.500" y="0" width="22.500" height="20.500" rx="1" fill="#f0f0f0" /><rect x="7.500" y="8" width="15.500" height="12.500" fill="#a8a8a8" /></svg>
      </Slot>
      <Slot>
        <svg width="30" height="30" viewBox="0 0 30 30">
          <defs><linearGradient id="chat" x1="0" y1="0" x2="1" y2=".6"><stop offset="0" stopColor="#8e72b0" /><stop offset=".6" stopColor="#7088dc" /><stop offset="1" stopColor="#5b66d6" /></linearGradient></defs>
          <path d="M1 29L2.500 22A14 14 0 1 1 10 28Z" fill="url(#chat)" />
          <rect x="7" y="9" width="12" height="12" rx="2" fill="#fff" /><path d="M20 13.500L24 10V20L20 17Z" fill="#fff" />
        </svg>
      </Slot>
      <Slot>
        <svg width="30" height="28" viewBox="0 0 30 28">
          <path d="M0 2Q0 .5 1.500 .5H10L13 4H30V14H0Z" fill="#dd9c09" /><path d="M0 6H10L13 4H30V27H0Z" fill="#ffcf48" />
          <path d="M5 27V22Q5 19.500 7.500 19.500H22.500Q25 19.500 25 22V27Z" fill="#0f73c4" /><path d="M9 23.300H21" stroke="#0a4f8c" strokeWidth="1.500" />
        </svg>
      </Slot>
      <Slot>
        <svg width="30" height="30" viewBox="0 0 30 30">
          <defs><linearGradient id="eg" x1="0" y1="0" x2="1" y2=".3"><stop offset="0" stopColor="#1f9be0" /><stop offset=".5" stopColor="#2cc1d6" /><stop offset="1" stopColor="#63e650" /></linearGradient></defs>
          <circle cx="15" cy="15" r="15" fill="#0c59a4" />
          <path d="M0 14C1 5 8 0 15 0C24 0 30 6 30 12.500C30 17 27 20 23 20C19 20 18 18.500 18.500 17.500C20 15 19 10 13 9C7 8.500 2 10 0 14Z" fill="url(#eg)" />
          <path d="M0 14C3 9 9 8 13 10C10 12 9 17 12 22C14 25 18 28 21 28.500C12 32 0 26 0 14Z" fill="#1b88dc" />
          <path d="M11.500 15C11.500 12 13 10.500 14.500 10.500C18 10.500 19.500 15 18.500 17.500C18.500 19.500 20 20.500 23 21H29.500C28 24 24 25 20 24.500C14 24 11.500 19 11.500 15Z" fill="#432c69" />
          <path d="M10.500 17C11 22 16 25.500 21 25C24.500 24.800 27 23.500 28.300 22C26 27 21 29.800 16 29.900C11 28 9 22 10.500 17Z" fill="#0f4f9a" />
        </svg>
      </Slot>
      <Slot>
        <svg width="30" height="30" viewBox="0 0 30 30">
          <path d="M9 6V1.500H21V6" fill="none" stroke="#2fb3ec" strokeWidth="1.800" /><path d="M.5 5.500H29.500V25Q29.500 29.500 25 29.500H5Q.5 29.500 .5 25Z" fill="#f0f0f0" />
          <rect x="9.500" y="11.500" width="5" height="5" fill="#f25022" /><rect x="15.500" y="11.500" width="5" height="5" fill="#7fba00" /><rect x="9.500" y="17.500" width="5" height="5" fill="#00a4ef" /><rect x="15.500" y="17.500" width="5" height="5" fill="#ffb900" />
        </svg>
      </Slot>
      <Slot>
        <svg width="30" height="28" viewBox="0 0 30 28"><path d="M0 9L15 0L30 9V14H0Z" fill="#0a5ea8" /><path d="M3 9H27V18H3Z" fill="#f4f4f4" /><path d="M0 9L15 18L30 9V28H0Z" fill="#38bdf0" /><path d="M0 28H30L14 18.500Z" fill="#1c94dc" /></svg>
      </Slot>
      <Slot><OfficeIcon letter="W" c={["#41a5ee", "#2b7cd3", "#185abd", "#103f91", "#1d59bd"]} /></Slot>
      <Slot>
        <svg width="30" height="30" viewBox="0 0 30 30"><circle cx="14.500" cy="14.500" r="11.500" fill="none" stroke="#84a926" strokeWidth="5.500" /><path d="M14 13.500L28.500 28V23L20 14.500Z" fill="#5f9a36" /><path d="M15 16L22 23.500L28.500 28.500H24L15 20Z" fill="#8cc152" /><path d="M12 12H18L20 15L15 20L12 17Z" fill="#f08a24" /></svg>
      </Slot>
      <Slot>
        <svg width="30" height="30" viewBox="0 0 30 30"><defs><linearGradient id="op" x1="0" y1="0" x2="0" y2="1"><stop offset="0" stopColor="#ff1b2d" /><stop offset="1" stopColor="#b00610" /></linearGradient></defs><circle cx="15" cy="15" r="14.500" fill="url(#op)" /><path d="M15 2A13.500 13.500 0 0 1 15 28C24 25 24 5 15 2Z" fill="#ff5050" /><ellipse cx="14.500" cy="15" rx="6.800" ry="11" fill="#432c69" /></svg>
      </Slot>
      <div className="relative ml-[3px] flex h-[50px] w-[49px] shrink-0 items-center rounded-[5px] border border-[#5a4780] bg-[#4b3571] pl-[9px]">
        <OfficeIcon letter="X" c={["#2fb877", "#21a366", "#107c41", "#185c37", "#107c41"]} />
        <div className="absolute top-[-1px] right-[5px] h-[50px] w-[6px] rounded-r-[5px] border-r border-[#5a4780]" />
        <div className="absolute bottom-[0px] left-[14px] h-[4px] w-[20px] rounded-full bg-[#c3a5dd]" />
      </div>
      <div className="relative ml-[16px] h-[30px] w-[30px]">
        <svg width="30" height="30" viewBox="0 0 30 30">
          <path d="M15 15L2 7.500A15 15 0 0 1 28 7.500Z" fill="#ea4335" /><path d="M15 30A15 15 0 0 1 2 7.500L10 19L18 22Z" fill="#34a853" />
          <path d="M15 8H28.300A15 15 0 0 1 15 30L21 18Z" fill="#fbc116" /><circle cx="15" cy="15" r="7.200" fill="#fff" /><circle cx="15" cy="15" r="5.600" fill="#2f7de9" />
        </svg>
        <svg className="absolute -top-[6px] left-[16px]" width="20" height="20" viewBox="0 0 20 20"><circle cx="10" cy="10" r="10" fill="#b274dc" /><circle cx="9.500" cy="6" r="3" fill="#e8e8e8" /><path d="M5.500 16L7.500 9H12L14 16Z" fill="#222" /><circle cx="9.800" cy="13" r="1.500" fill="#ddd" /></svg>
        <div className="absolute -bottom-[9px] left-[11px] h-[4px] w-[8px] rounded-full bg-[#a99bbb]" />
      </div>
      <svg className="ml-[161px]" width="14" height="9" viewBox="0 0 14 9" fill="none" stroke="#fff" strokeWidth="2"><path d="M1 7.500L7 1.500L13 7.500" /></svg>
      <svg className="ml-[22px]" width="21" height="21" viewBox="0 0 21 21" fill="none" stroke="#fff" strokeWidth="1.300"><path d="M1 10A9 9 0 0 1 18.500 6M19 1V6.500H13.500M8 19.500A9 9 0 0 1 2 14.500M1.500 20V14.500H7" /><circle cx="15.500" cy="15.500" r="5" fill="#ff9800" stroke="none" /></svg>
      <svg className="ml-[22px]" width="14" height="20" viewBox="0 0 14 20" fill="none" stroke="#d3b8e6" strokeWidth="1.500"><rect x="4" y=".8" width="6" height="12" rx="3" fill="#6b5389" /><path d="M1 9C1 17 13 17 13 9M7 15.500V20" /></svg>
      <svg className="ml-[23px]" width="20" height="16" viewBox="0 0 20 16" fill="none" stroke="#fff" strokeWidth="1.600"><path d="M1 6C6 .5 14 .5 19 6M3.500 9C7 5 13 5 16.500 9M6.500 12C8.500 9.500 11.500 9.500 13.500 12" /><circle cx="10" cy="14" r="1.600" fill="#fff" stroke="none" /></svg>
      <svg className="ml-[10px]" width="20" height="16" viewBox="0 0 20 16" fill="none" stroke="#fff" strokeWidth="1.500"><path d="M1 5.500H4L8.500 1.500V14.500L4 10.500H1ZM11 5.500Q13 8 11 10.500" /><path d="M13.500 3.500Q17 8 13.500 12.500M16 1.500Q21 8 16 14.500" stroke="#7b6a98" /></svg>
      <svg className="ml-[10px]" width="20" height="14" viewBox="0 0 20 14" fill="none" stroke="#fff" strokeWidth="1.600"><rect x=".8" y=".8" width="16" height="12.400" rx="2.500" /><rect x="3" y="3" width="3" height="8" rx="1" fill="#fff" stroke="none" /><path d="M18.500 4.500V9.500" strokeWidth="2.500" /></svg>
      <div className="w-[90px] pb-[2px] text-right text-[14.500px] leading-[20px] tracking-[0px]">
        <div>10:03 AM</div>
        <div>5/16/2023</div>
      </div>
      <div className="ml-[10px] flex h-[20px] w-[20px] items-center justify-center rounded-full bg-[#c3a5dd] text-[12px] text-black">2</div>
    </div>
  );
}

export default function App() {
  return (
    <div className="flex h-[1080px] w-[1920px] flex-col overflow-hidden bg-[#e6e6e6] font-['Open_Sans',sans-serif]">
      <div className="bg-[#217346]">
        <TitleBar />
        <RibbonTabs />
      </div>
      <Ribbon />
      <FormulaBar />
      <div className="flex h-[742px]">
        <div className="flex w-[1564px] shrink-0 flex-col">
          <div className="flex">
            <Grid />
            <VScroll />
          </div>
          <SheetTabs />
        </div>
        <div className="mt-[2px] h-[737px] w-px bg-[#c6c6c6]" />
        <FormatPane />
      </div>
      <StatusBar />
      <Taskbar />
    </div>
  );
}
